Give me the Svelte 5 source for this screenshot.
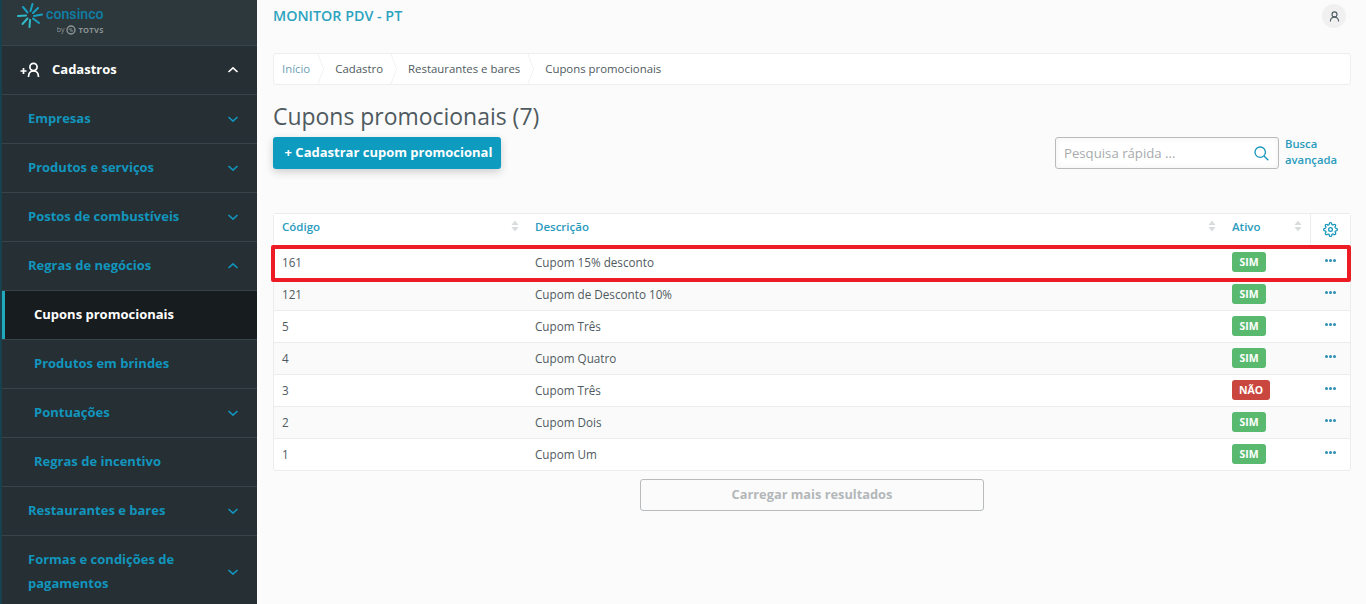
<script lang="ts">
	const menu = [
		{ label: 'Empresas', chevron: 'down', level: 1 },
		{ label: 'Produtos e serviços', chevron: 'down', level: 1 },
		{ label: 'Postos de combustíveis', chevron: 'down', level: 1 },
		{ label: 'Regras de negócios', chevron: 'up', level: 1 },
		{ label: 'Cupons promocionais', level: 2, active: true },
		{ label: 'Produtos em brindes', level: 2 },
		{ label: 'Pontuações', chevron: 'down', level: 2 },
		{ label: 'Regras de incentivo', level: 2 },
		{ label: 'Restaurantes e bares', chevron: 'down', level: 1 }
	];

	const crumbs = ['Cadastro', 'Restaurantes e bares', 'Cupons promocionais'];

	const rows = [
		{ code: '161', name: 'Cupom 15% desconto', active: true },
		{ code: '121', name: 'Cupom de Desconto 10%', active: true },
		{ code: '5', name: 'Cupom Três', active: true },
		{ code: '4', name: 'Cupom Quatro', active: true },
		{ code: '3', name: 'Cupom Três', active: false },
		{ code: '2', name: 'Cupom Dois', active: true },
		{ code: '1', name: 'Cupom Um', active: true }
	];
</script>

{#snippet chevron(dir, color)}
	<svg class="chev" width="12" height="8" viewBox="0 0 12 8" fill="none" stroke={color} stroke-width="1.6">
		{#if dir === 'up'}
			<path d="M1.5 6 6 1.8 10.5 6" />
		{:else}
			<path d="M1.5 2 6 6.2 10.5 2" />
		{/if}
	</svg>
{/snippet}

{#snippet sorter()}
	<svg class="sort" width="8" height="12" viewBox="0 0 8 12" fill="#d9dcdd">
		<path d="M4 0.5 7.5 5H0.5Z" />
		<path d="M4 11.5 0.5 7H7.5Z" />
	</svg>
{/snippet}

<div class="page">
	<aside class="sidebar">
		<div class="logo">
			<svg width="26" height="25" viewBox="0 0 26 25" fill="none" stroke="#1aa0c0" stroke-width="2" stroke-linecap="round">
				<path d="M13.5 8 15.5 1" />
				<path d="M16 10 21 5" />
				<path d="M17 13 25 11.5" />
				<path d="M16 15.5 22 20" />
				<path d="M13 17 12.5 24" stroke="#31bcc8" />
				<path d="M10.5 15.5 5.5 21" stroke="#31bcc8" />
				<path d="M9 12.5 1 13" stroke="#31bcc8" />
				<path d="M10.5 9.5 6 4" />
			</svg>
			<div class="logo-text">
				<span class="logo-name">consinco</span>
				<span class="logo-by">by
					<svg width="10" height="10" viewBox="0 0 11 11" fill="none" stroke="#8d9597" stroke-width="1.5">
						<circle cx="5.5" cy="5.5" r="4.4" />
						<path d="M3 4.5h3.5M8 6.5H4.5" stroke-width="1.1" />
					</svg>
					<b>TOTVS</b>
				</span>
			</div>
		</div>

		<div class="item top">
			<svg class="top-icon" width="21" height="16" viewBox="0 0 21 16" fill="none" stroke="#fff" stroke-width="1.7">
				<path d="M0.5 9h6M3.5 6v6" />
				<path d="M8.5 15c0-3 .8-6 5-6s5 3 5 6" />
				<circle cx="13.5" cy="5" r="3.6" />
			</svg>
			<span>Cadastros</span>
			{@render chevron('up', '#fff')}
		</div>

		{#each menu as entry}
			<div class="item" class:sub={entry.level === 2} class:active={entry.active}>
				<span>{entry.label}</span>
				{#if entry.chevron}
					{@render chevron(entry.chevron, '#1295bd')}
				{/if}
			</div>
		{/each}

		<div class="item tall">
			<span>Formas e condições de pagamentos</span>
			{@render chevron('down', '#1295bd')}
		</div>
	</aside>

	<main class="content">
		<header class="topbar">
			<span class="app-name">MONITOR PDV - PT</span>
			<span class="avatar">
				<svg width="11" height="11" viewBox="0 0 11 11" fill="none" stroke="#4c5a60" stroke-width="1.1">
					<circle cx="5.5" cy="3.4" r="2.5" />
					<path d="M1.4 10.5c0-2.6 1-4.3 4.1-4.3s4.1 1.7 4.1 4.3" />
				</svg>
			</span>
		</header>

		<nav class="crumbs">
			<span class="crumb home">Início</span>
			{#each crumbs as crumb}
				<span class="crumb">{crumb}</span>
			{/each}
		</nav>

		<h1>Cupons promocionais (7)</h1>

		<div class="actions">
			<button class="primary">+ Cadastrar cupom promocional</button>
			<div class="search-wrap">
				<div class="search">
					<span>Pesquisa rápida ...</span>
					<svg width="15" height="15" viewBox="0 0 15 15" fill="none" stroke="#1295bd" stroke-width="1.3">
						<circle cx="6.2" cy="6.2" r="5.2" />
						<path d="M10 10l4.3 4.3" />
					</svg>
				</div>
				<span class="advanced">Busca avançada</span>
			</div>
		</div>

		<div class="table-wrap">
			<div class="row head">
				<div class="col code">Código {@render sorter()}</div>
				<div class="col desc">Descrição {@render sorter()}</div>
				<div class="col state">Ativo {@render sorter()}</div>
				<div class="col tools">
					<svg width="15" height="15" viewBox="0 0 24 24" fill="none" stroke="#1295bd" stroke-width="2">
						<circle cx="12" cy="12" r="3" />
						<path d="M19.4 15a1.65 1.65 0 0 0 .33 1.82l.06.06a2 2 0 0 1 0 2.83 2 2 0 0 1-2.83 0l-.06-.06a1.65 1.65 0 0 0-1.82-.33 1.65 1.65 0 0 0-1 1.51V21a2 2 0 0 1-2 2 2 2 0 0 1-2-2v-.09A1.65 1.65 0 0 0 9 19.4a1.65 1.65 0 0 0-1.82.33l-.06.06a2 2 0 0 1-2.83 0 2 2 0 0 1 0-2.83l.06-.06a1.65 1.65 0 0 0 .33-1.82 1.65 1.65 0 0 0-1.51-1H3a2 2 0 0 1-2-2 2 2 0 0 1 2-2h.09A1.65 1.65 0 0 0 4.6 9a1.65 1.65 0 0 0-.33-1.82l-.06-.06a2 2 0 0 1 0-2.83 2 2 0 0 1 2.83 0l.06.06a1.65 1.65 0 0 0 1.82.33H9a1.65 1.65 0 0 0 1-1.51V3a2 2 0 0 1 2-2 2 2 0 0 1 2 2v.09a1.65 1.65 0 0 0 1 1.51 1.65 1.65 0 0 0 1.82-.33l.06-.06a2 2 0 0 1 2.83 0 2 2 0 0 1 0 2.83l-.06.06a1.65 1.65 0 0 0-.33 1.82V9a1.65 1.65 0 0 0 1.51 1H21a2 2 0 0 1 2 2 2 2 0 0 1-2 2h-.09a1.65 1.65 0 0 0-1.51 1z" />
					</svg>
				</div>
			</div>
			{#each rows as row, i}
				<div class="row" class:alt={i % 2 === 1}>
					<div class="col code">{row.code}</div>
					<div class="col desc">{row.name}</div>
					<div class="col state">
						<span class="tag" class:off={!row.active}>{row.active ? 'SIM' : 'NÃO'}</span>
					</div>
					<div class="col more"><i></i><i></i><i></i></div>
				</div>
			{/each}
			<div class="highlight"></div>
		</div>

		<div class="load-wrap">
			<button class="load">Carregar mais resultados</button>
		</div>
	</main>
</div>

<style>
	:global(body) {
		margin: 0;
		background: #fbfbfb;
		overflow: hidden;
	}

	.page {
		display: flex;
		height: 604px;
		overflow: hidden;
		font-family: 'Open Sans', 'Noto Sans', sans-serif;
		color: #4f5a60;
	}

	.sidebar {
		width: 255px;
		flex: none;
		background: #262f33;
		border-left: 2px solid #17414f;
		overflow: hidden;
	}

	.logo {
		height: 45px;
		display: flex;
		gap: 3px;
		padding: 3px 0 0 15px;
		box-sizing: border-box;
		background: #2d383c;
	}

	.logo-text {
		display: flex;
		flex-direction: column;
		align-items: flex-end;
		margin-top: 2px;
	}

	.logo-name {
		font-family: Roboto, sans-serif;
		font-size: 14.2px;
		line-height: 18px;
		font-weight: 500;
		color: #0f7fa6;
	}

	.logo-by {
		display: flex;
		align-items: center;
		gap: 2px;
		margin-top: 1px;
		font-size: 7px;
		line-height: 12px;
		color: #8d9597;
	}

	.logo-by b {
		font-size: 7.5px;
		letter-spacing: 0.3px;
	}

	.item {
		height: 48px;
		border-top: 1px solid #37444a;
		display: flex;
		align-items: center;
		justify-content: space-between;
		padding: 0 18px 0 26px;
		font-size: 13px;
		font-weight: 700;
		color: #1295bd;
	}

	.item span {
		margin-bottom: 2px;
	}

	.item.top {
		color: #fff;
		justify-content: flex-start;
		padding-left: 18px;
	}

	.item.top span {
		margin-left: 11px;
		flex: 1;
	}

	.item.sub {
		padding-left: 32px;
	}

	.item.active {
		background: #171c1f;
		color: #fff;
		box-shadow: inset 3px 0 0 #21a8bd;
	}

	.item.tall {
		height: 70px;
		line-height: 24px;
	}

	.item.tall span {
		width: 170px;
		margin: 0;
	}

	.item.tall .chev {
		margin-top: 2px;
	}

	.chev {
		flex: none;
	}

	.content {
		flex: 1;
		min-width: 0;
		padding: 0 15px 0 16px;
	}

	.topbar {
		height: 53px;
		display: flex;
		justify-content: space-between;
		align-items: flex-start;
	}

	.app-name {
		margin-top: 6px;
		font-size: 14.3px;
		line-height: 19px;
		font-weight: 600;
		color: #2ba3bf;
	}

	.avatar {
		width: 24px;
		height: 24px;
		margin: 4px 5px 0 0;
		border-radius: 50%;
		background: #f0f0f0;
		display: flex;
		align-items: center;
		justify-content: center;
	}

	.crumbs {
		height: 30px;
		background: #fff;
		border: 1px solid #eeeeee;
		border-radius: 3px;
		display: flex;
		align-items: center;
		font-size: 11.4px;
		overflow: hidden;
	}

	.crumb {
		position: relative;
		padding: 0 17px 0 8px;
		line-height: 30px;
		white-space: nowrap;
	}

	.crumb.home {
		color: #6d9fb1;
	}

	.crumb:not(:last-child)::after {
		content: '';
		position: absolute;
		right: -2px;
		top: 4px;
		width: 21px;
		height: 21px;
		border-top: 1px solid #e8e8e8;
		border-right: 1px solid #e8e8e8;
		transform: scaleX(0.38) rotate(45deg);
		transform-origin: center;
	}

	h1 {
		margin: 15px 0 0;
		font-size: 22.95px;
		line-height: 33px;
		font-weight: 400;
		color: #4f5a60;
	}

	.actions {
		display: flex;
		justify-content: space-between;
		align-items: flex-start;
		height: 76px;
		margin-top: 4px;
	}

	.primary {
		height: 32px;
		width: 228px;
		padding: 0 0 2px 3px;
		border: 0;
		border-radius: 3px;
		background: #0d9bc0;
		color: #fff;
		font: 700 13px 'Open Sans', sans-serif;
		box-shadow: 0 3px 8px rgba(0, 0, 0, 0.18);
	}

	.search-wrap {
		display: flex;
		gap: 6px;
		width: 296px;
	}

	.search {
		box-sizing: border-box;
		width: 224px;
		height: 32px;
		display: flex;
		align-items: center;
		justify-content: space-between;
		padding: 0 9px 0 8px;
		background: #fff;
		border: 1px solid #b8bbbd;
		border-radius: 3px;
		font-size: 13.2px;
		color: #a7abad;
		box-shadow: inset 0 0 6px rgba(0, 0, 0, 0.06);
	}

	.advanced {
		width: 60px;
		margin-top: -1px;
		font-size: 11.3px;
		line-height: 16px;
		font-weight: 600;
		color: #2a9bbd;
	}

	.table-wrap {
		position: relative;
		border: 1px solid #ececec;
		border-radius: 3px;
		background: #fff;
		font-size: 11.7px;
	}

	.row {
		display: flex;
		align-items: center;
		height: 31px;
		border-top: 1px solid #ececec;
	}

	.row.alt {
		background: #fafafa;
	}

	.row.head {
		height: 32px;
		border-top: 0;
		font-size: 11.5px;
		font-weight: 600;
		color: #2a9bbd;
		background: #fff;
		align-items: stretch;
	}

	.head .col {
		display: flex;
		align-items: center;
		justify-content: space-between;
		padding-bottom: 8px;
	}

	.col {
		box-sizing: border-box;
		padding-left: 8px;
		padding-bottom: 2px;
	}

	.code {
		width: 253px;
		padding-right: 8px;
	}

	.desc {
		width: 697px;
		padding-right: 8px;
	}

	.state {
		width: 86px;
		padding-left: 8px;
		padding-right: 8px;
	}

	.head .tools {
		flex: 1;
		justify-content: center;
		padding: 0 0 2px;
		border-left: 1px solid #ececec;
	}

	.more {
		flex: 1;
		display: flex;
		justify-content: center;
		gap: 1px;
		padding: 0 0 4px;
	}

	.more i {
		width: 3px;
		height: 3px;
		border-radius: 50%;
		background: #2a8fb0;
	}

	.tag {
		display: inline-block;
		padding: 0 6px;
		min-width: 22px;
		text-align: center;
		height: 20px;
		line-height: 20px;
		border-radius: 3px;
		background: #58b96f;
		color: #fff;
		font-size: 10.5px;
		font-weight: 700;
	}

	.tag.off {
		min-width: 26px;
		background: #c9473e;
	}

	.highlight {
		position: absolute;
		left: -3px;
		right: -1px;
		top: 31px;
		height: 29px;
		border: 4px solid #ed1c24;
		border-radius: 2px;
		pointer-events: none;
	}

	.load-wrap {
		display: flex;
		justify-content: center;
		margin-top: 8px;
	}

	.load {
		width: 344px;
		height: 32px;
		padding: 0 0 2px;
		background: #fbfbfb;
		border: 1px solid #b8bbbd;
		border-radius: 3px;
		color: #b4b7b9;
		font: 700 12.8px 'Open Sans', sans-serif;
	}
</style>
